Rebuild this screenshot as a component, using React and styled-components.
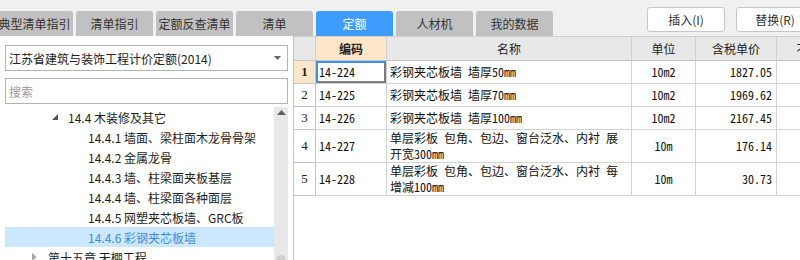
import React from 'react';
import styled, { createGlobalStyle } from 'styled-components';

const GlobalStyle = createGlobalStyle`
  body {
    margin: 0;
    background: #fff;
    font-family: "Noto Sans CJK SC", "Liberation Sans", sans-serif;
    font-size: 12px;
    color: #222;
    overflow: hidden;
  }
`;

const tabs = ['典型清单指引', '清单指引', '定额反查清单', '清单', '定额', '人材机', '我的数据'];

const tree = [
  { level: 3, text: '14.4 木装修及其它', open: true },
  { level: 4, text: '14.4.1 墙面、梁柱面木龙骨骨架' },
  { level: 4, text: '14.4.2 金属龙骨' },
  { level: 4, text: '14.4.3 墙、柱梁面夹板基层' },
  { level: 4, text: '14.4.4 墙、柱梁面各种面层' },
  { level: 4, text: '14.4.5 网塑夹芯板墙、GRC板' },
  { level: 4, text: '14.4.6 彩钢夹芯板墙', selected: true },
  { level: 2, text: '第十五章 天棚工程', open: false },
];

const rows = [
  { code: '14-224', name: '彩钢夹芯板墙 墙厚50mm', unit: '10m2', price: '1827.05' },
  { code: '14-225', name: '彩钢夹芯板墙 墙厚70mm', unit: '10m2', price: '1969.62' },
  { code: '14-226', name: '彩钢夹芯板墙 墙厚100mm', unit: '10m2', price: '2167.45' },
  { code: '14-227', name: '单层彩板 包角、包边、窗台泛水、内衬 展开宽300mm', unit: '10m', price: '176.14', tall: true },
  { code: '14-228', name: '单层彩板 包角、包边、窗台泛水、内衬 每增减100mm', unit: '10m', price: '30.73', tall: true },
];

const Page = styled.div`
  width: 800px;
  height: 260px;
  display: flex;
  flex-direction: column;
  overflow: hidden;
`;

const TopBar = styled.div`
  height: 36px;
  flex-shrink: 0;
  background: #f0f0f0;
  display: flex;
`;

const TabList = styled.div`
  display: flex;
  gap: 3px;
  margin-left: -4px;
  align-self: flex-end;
`;

const Tab = styled.div`
  width: 77px;
  height: 25px;
  flex-shrink: 0;
  display: flex;
  align-items: center;
  justify-content: center;
  border-radius: 3px 3px 0 0;
  background: ${(p) => (p.$active ? '#3f9cff' : '#c1c1c1')};
  color: ${(p) => (p.$active ? '#fff' : '#333')};
  font-size: 12px;
`;

const Actions = styled.div`
  display: flex;
  gap: 11px;
  margin: 7px 0 0 94px;
  align-self: flex-start;
`;

const Button = styled.div`
  width: 78px;
  height: 25px;
  box-sizing: border-box;
  flex-shrink: 0;
  border: 1px solid #c6c6c6;
  border-radius: 3px;
  background: #fff;
  display: flex;
  align-items: center;
  justify-content: center;
  color: #333;
`;

const Body = styled.div`
  flex: 1;
  display: flex;
  min-height: 0;
`;

const Side = styled.div`
  width: 294px;
  flex-shrink: 0;
  box-sizing: border-box;
  border-right: 1px solid #c4c4c4;
  padding: 9px 5px 0 5px;
  display: flex;
  flex-direction: column;
`;

const Field = styled.div`
  height: 26px;
  box-sizing: border-box;
  flex-shrink: 0;
  border: 1px solid #b4b4b4;
  display: flex;
  align-items: center;
  justify-content: space-between;
  padding: 0 6px 0 3px;
  color: ${(p) => (p.$placeholder ? '#9a9a9a' : '#222')};
  margin-top: ${(p) => p.$gap || 0}px;
`;

const TreeArea = styled.div`
  flex: 1;
  display: flex;
  margin-top: 3px;
  min-height: 0;
`;

const TreeList = styled.div`
  flex: 1;
`;

const TreeItem = styled.div`
  height: 20px;
  display: flex;
  align-items: center;
  padding-left: ${(p) => 27 + (p.$level - 2) * 20}px;
  background: ${(p) => (p.$selected ? '#cce8ff' : 'transparent')};
  color: ${(p) => (p.$selected ? '#3d8ee0' : '#1e1e1e')};
  white-space: nowrap;
`;

const Toggle = styled.span`
  width: 16px;
  flex-shrink: 0;
  display: flex;
  align-items: center;
`;

const ScrollTrack = styled.div`
  width: 14px;
  flex-shrink: 0;
  background: #e8e8e8;
  display: flex;
  flex-direction: column;
  align-items: center;
  justify-content: space-between;
  padding-top: 3px;
`;

const Thumb = styled.div`
  width: 10px;
  height: 5px;
  border-radius: 5px 5px 0 0;
  background: #d0d0d0;
`;

const Grid = styled.div`
  flex: 1;
  display: grid;
  grid-template-columns: 22px 71px 245px 64px 81px 100px;
  grid-auto-rows: min-content;
  align-content: start;
  border-top: 1px solid #cfcfcf;
  overflow: hidden;
`;

const HeadCell = styled.div`
  height: 24px;
  box-sizing: border-box;
  border-right: 1px solid #cfcfcf;
  border-bottom: 1px solid #c4c4c4;
  background: ${(p) => (p.$hot ? '#fde6c9' : '#e8e8e8')};
  font-weight: ${(p) => (p.$hot ? 700 : 400)};
  display: flex;
  align-items: center;
  justify-content: center;
  white-space: nowrap;
  overflow: hidden;
`;

const Cell = styled.div`
  height: ${(p) => (p.$tall ? 33 : 23)}px;
  box-sizing: border-box;
  border-right: 1px solid #d3d3d3;
  border-bottom: 1px solid #d3d3d3;
  display: flex;
  align-items: center;
  justify-content: ${(p) => p.$align || 'flex-start'};
  padding: 0 ${(p) => (p.$align === 'flex-end' ? 4 : 3)}px 0 3px;
  font-family: "Noto Sans Mono CJK SC", "Noto Sans CJK SC", monospace;
  font-size: 12px;
  line-height: 16px;
  color: #111;
  overflow: hidden;
  box-shadow: ${(p) => (p.$focus ? 'inset 2px 2px 0 #3d8fef, inset -2px -2px 0 #7c7c7c' : 'none')};
`;

const NumCell = styled(Cell)`
  justify-content: center;
  padding: 0;
  border-color: #c4c4c4;
  background: ${(p) => (p.$active ? '#fde6c9' : '#fff')};
  font-family: "Liberation Serif", serif;
  font-size: 13px;
  font-weight: ${(p) => (p.$active ? 700 : 400)};
  color: #222;
`;

const ExpandedIcon = () => (
  <svg width="6" height="6" viewBox="0 0 6 6">
    <polygon points="6,0 6,6 0,6" fill="#555" />
  </svg>
);

const CollapsedIcon = () => (
  <svg width="5" height="8" viewBox="0 0 5 8">
    <polygon points="0,0 4.5,4 0,8" fill="#a6a6a6" />
  </svg>
);

export default function App() {
  return (
    <Page>
      <GlobalStyle />
      <TopBar>
        <TabList>
          {tabs.map((t) => (
            <Tab key={t} $active={t === '定额'}>{t}</Tab>
          ))}
        </TabList>
        <Actions>
          <Button>插入(I)</Button>
          <Button>替换(R)</Button>
        </Actions>
      </TopBar>
      <Body>
        <Side>
          <Field>
            <span>江苏省建筑与装饰工程计价定额(2014)</span>
            <svg width="7" height="4" viewBox="0 0 7 4">
              <polygon points="0,0 7,0 3.5,4" fill="#666" />
            </svg>
          </Field>
          <Field $gap={7} $placeholder>搜索</Field>
          <TreeArea>
            <TreeList>
              {tree.map((item) => (
                <TreeItem key={item.text} $level={item.level} $selected={item.selected}>
                  <Toggle>
                    {item.open === true && <ExpandedIcon />}
                    {item.open === false && <CollapsedIcon />}
                  </Toggle>
                  {item.text}
                </TreeItem>
              ))}
            </TreeList>
            <ScrollTrack>
              <svg width="9" height="5" viewBox="0 0 9 5">
                <polygon points="0,5 9,5 4.5,0" fill="#606060" />
              </svg>
              <Thumb />
            </ScrollTrack>
          </TreeArea>
        </Side>
        <Grid>
          <HeadCell />
          <HeadCell $hot>编码</HeadCell>
          <HeadCell>名称</HeadCell>
          <HeadCell>单位</HeadCell>
          <HeadCell>含税单价</HeadCell>
          <HeadCell>不含税单价</HeadCell>
          {rows.map((r, i) => (
            <React.Fragment key={r.code}>
              <NumCell $tall={r.tall} $active={i === 0}>{i + 1}</NumCell>
              <Cell $tall={r.tall} $focus={i === 0}>{r.code}</Cell>
              <Cell $tall={r.tall}>{r.name}</Cell>
              <Cell $tall={r.tall} $align="center">{r.unit}</Cell>
              <Cell $tall={r.tall} $align="flex-end">{r.price}</Cell>
              <Cell $tall={r.tall} />
            </React.Fragment>
          ))}
        </Grid>
      </Body>
    </Page>
  );
}
